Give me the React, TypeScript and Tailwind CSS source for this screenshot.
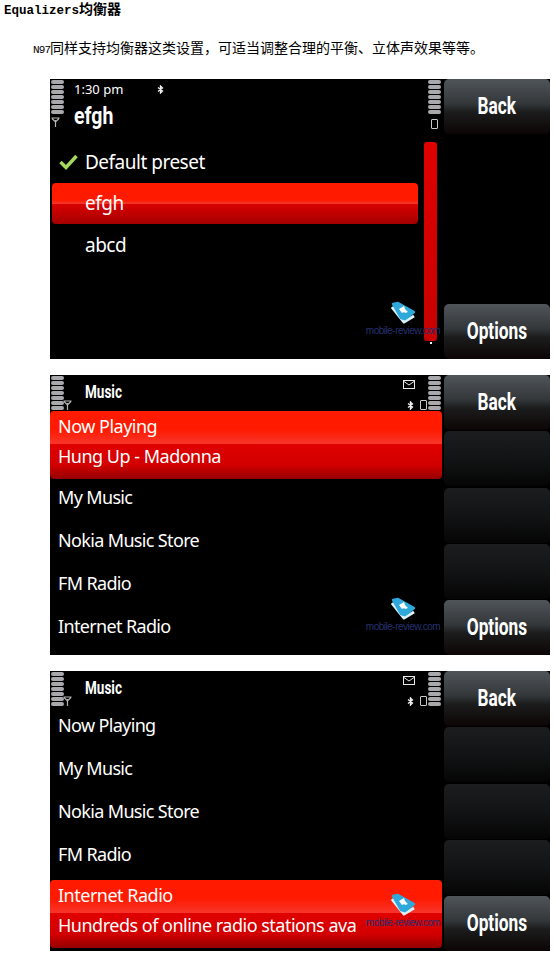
const uiFont = "font-['Noto_Sans',sans-serif]";

const Bars = () => (
    <div className="flex w-[13px] flex-col gap-[1px]">
        {[0, 1, 2, 3, 4, 5, 6].map((i) => (
            <div key={i} className="h-[4px] rounded-[2px] bg-[#a9a9ad]" />
        ))}
    </div>
);

const Antenna = () => (
    <svg width="9" height="10" viewBox="0 0 9 10" fill="none" stroke="#b5b5b5" strokeWidth="1.2">
        <path d="M0.5 1h8M1 1.5 4.5 5 8 1.5M4.5 3v7" />
    </svg>
);

const Battery = () => <div className="h-[10px] w-[7px] rounded-[1px] border border-[#c8c8c8]" />;

const Envelope = () => (
    <svg width="12" height="9" viewBox="0 0 12 9" fill="none" stroke="#e8e8e8" strokeWidth="1">
        <rect x="0.5" y="0.5" width="11" height="8" />
        <path d="M1 1.5 6 5l5-3.5" />
    </svg>
);

const Bluetooth = () => (
    <svg width="7" height="9" viewBox="0 0 7 9" fill="none" stroke="#f0f0f0" strokeWidth="1.3">
        <path d="M1 2.5 5.5 6 3.5 8V1l2 2L1 6.5" />
    </svg>
);

const Softkey = ({ label, blank }: { label?: string; blank?: boolean }) => (
    <div
        className={`flex h-[55px] items-center justify-center rounded-[5px] pb-[2px] ${
            blank
                ? "bg-[linear-gradient(#1b1d1f,#111213_55%,#050505)]"
                : "bg-[linear-gradient(#50555a,#33373a_45%,#1c1c1c_60%,#0c0505)]"
        }`}
    >
        {label && (
            <span className="inline-block origin-center scale-x-[0.72] font-['Roboto',sans-serif] text-[24px] font-bold text-white">
                {label}
            </span>
        )}
    </div>
);

const Watermark = () => (
    <div className="absolute left-[312px] top-[222px] flex w-[82px] flex-col items-center">
        <svg width="28" height="24" viewBox="0 0 28 24" strokeLinejoin="round">
            <path d="M3 6 15 21l10-6" fill="none" stroke="#d8f2fb" strokeWidth="3" />
            <path d="M4 3 9 2 25 11 16 18 12 17Z" fill="#2fa8dc" stroke="#2fa8dc" strokeWidth="2.5" />
            <path d="m10 8 5-3 1 3 3 3-3 1-1-1-2 1Z" fill="#ffffff" />
        </svg>
        <span className="whitespace-nowrap font-['Liberation_Sans',sans-serif] text-[10px] leading-[12px] tracking-[-0.5px] text-[#27306f]">
            mobile-review.com
        </span>
    </div>
);

const Row = ({ text }: { text: string }) => (
    <div className={`flex h-[43px] items-center pl-[8px] text-[18px] tracking-[-0.65px] text-white ${uiFont}`}>{text}</div>
);

const Selected = ({ top, bottom }: { top: string; bottom: string }) => (
    <div className={`h-[68px] overflow-hidden rounded-[4px] text-[18px] tracking-[-0.5px] text-white ${uiFont}`}>
        <div className="flex h-[33px] items-center bg-[linear-gradient(#ff1a00,#ff1a00_55%,#f8352b)] pb-[3px] pl-[8px]">
            {top}
        </div>
        <div className="flex h-[35px] items-center bg-[linear-gradient(#e00000,#d20000_60%,#950000)] pb-[10px] pl-[8px]">
            {bottom}
        </div>
    </div>
);

const MusicHeader = ({ height }: { height: string }) => (
    <div className={`flex items-start justify-between ${height}`}>
        <div className="flex pl-[1px] pt-[1px]">
            <Bars />
            <div className="-ml-[1px] mt-[24px]">
                <Antenna />
            </div>
            <span className="ml-[13px] mt-[2px] inline-block origin-left scale-x-[0.75] font-['Roboto',sans-serif] text-[18px] font-bold text-white">
                Music
            </span>
        </div>
        <div className="flex pr-[1px] pt-[1px]">
            <div className="mr-[1px] flex flex-col items-end">
                <div className="mr-[12px] mt-[4px]">
                    <Envelope />
                </div>
                <div className="mt-[11px] flex items-center gap-[6px]">
                    <Bluetooth />
                    <Battery />
                </div>
            </div>
            <Bars />
        </div>
    </div>
);

const Keys = ({ middle }: { middle: boolean }) => (
    <div className="flex h-[280px] w-[106px] flex-col justify-between">
        <Softkey label="Back" />
        {middle && <Softkey blank />}
        {middle && <Softkey blank />}
        {middle && <Softkey blank />}
        <Softkey label="Options" />
    </div>
);

const PresetScreen = () => (
    <div className="relative flex h-[280px] w-[500px] justify-between bg-black">
        <div className="flex w-[392px] flex-col">
            <div className="flex h-[62px] justify-between px-[1px] pt-[1px]">
                <div className="flex">
                    <div className="flex flex-col">
                        <Bars />
                        <div className="mt-[3px]">
                            <Antenna />
                        </div>
                    </div>
                    <div className="ml-[10px] text-white">
                        <div className="flex items-center">
                            <span className={`w-[83px] text-[13px] leading-[18px] ${uiFont}`}>1:30 pm</span>
                            <Bluetooth />
                        </div>
                        <div className="mt-[5px] origin-left scale-x-[0.85] font-['Roboto',sans-serif] text-[23px] font-bold leading-[28px]">
                            efgh
                        </div>
                    </div>
                </div>
                <div className="flex flex-col items-center">
                    <Bars />
                    <div className="mt-[5px]">
                        <Battery />
                    </div>
                </div>
            </div>
            <div className="flex">
                <div className="w-[370px] px-[2px]">
                    <div className={`flex h-[42px] items-center text-[19px] tracking-[-0.5px] text-white ${uiFont}`}>
                        <svg width="19" height="16" viewBox="0 0 19 16" className="mx-[7px]" fill="none" stroke="#a6d85f" strokeWidth="3.4">
                            <path d="m1.5 8 5.5 5.5L17.5 2" />
                        </svg>
                        Default preset
                    </div>
                    <div className={`flex h-[41px] overflow-hidden rounded-[4px] text-[19px] tracking-[-0.5px] text-white ${uiFont}`}>
                        <div className="flex w-full items-center bg-[linear-gradient(#ff1a00,#ff1a00_42%,#f4352a_50%,#d80000_52%,#a30000)] pl-[33px]">
                            efgh
                        </div>
                    </div>
                    <div className={`flex h-[43px] items-center pl-[33px] text-[19px] tracking-[-0.5px] text-white ${uiFont}`}>abcd</div>
                </div>
                <div className="ml-[4px] mt-[1px] flex flex-col items-center">
                    <div className="h-[199px] w-[13px] rounded-[3px] bg-[linear-gradient(#e00000,#c80000)]" />
                    <div className="mt-[1px] h-[2px] w-[2px] bg-white" />
                </div>
            </div>
        </div>
        <Keys middle={false} />
        <Watermark />
    </div>
);

const NowPlayingScreen = () => (
    <div className="relative flex h-[280px] w-[500px] justify-between bg-black">
        <div className="flex w-[392px] flex-col">
            <MusicHeader height="h-[36px]" />
            <Selected top="Now Playing" bottom="Hung Up - Madonna" />
            <div className="-mt-[3px]">
                <Row text="My Music" />
                <Row text="Nokia Music Store" />
                <Row text="FM Radio" />
                <Row text="Internet Radio" />
            </div>
        </div>
        <Keys middle />
        <Watermark />
    </div>
);

const InternetRadioScreen = () => (
    <div className="relative flex h-[280px] w-[500px] justify-between bg-black">
        <div className="flex w-[392px] flex-col">
            <MusicHeader height="h-[33px]" />
            <Row text="Now Playing" />
            <Row text="My Music" />
            <Row text="Nokia Music Store" />
            <Row text="FM Radio" />
            <div className="mt-[4px]">
                <Selected top="Internet Radio" bottom="Hundreds of online radio stations ava" />
            </div>
        </div>
        <Keys middle />
        <Watermark />
    </div>
);

export default function App() {
    return (
        <div className="h-[956px] w-[556px] overflow-hidden bg-white text-black">
            <h1 className="h-[17px] pl-[4px] pt-[3px] font-['Liberation_Mono','Noto_Sans_CJK_SC',monospace] text-[12.5px] font-bold leading-[14px]">
                Equalizers<span className="text-[14px]">均衡器</span>
            </h1>
            <p className="h-[40px] pl-[33px] pt-[24px] font-['Liberation_Mono','Noto_Sans_CJK_SC',monospace] text-[14px] leading-[16px]">
                <span className="text-[11px] tracking-[-0.9px]">N97</span>同样支持均衡器这类设置，可适当调整合理的平衡、立体声效果等等。
            </p>
            <div className="flex flex-col gap-[16px] pl-[50px] pt-[22px]">
                <PresetScreen />
                <NowPlayingScreen />
                <InternetRadioScreen />
            </div>
        </div>
    );
}
